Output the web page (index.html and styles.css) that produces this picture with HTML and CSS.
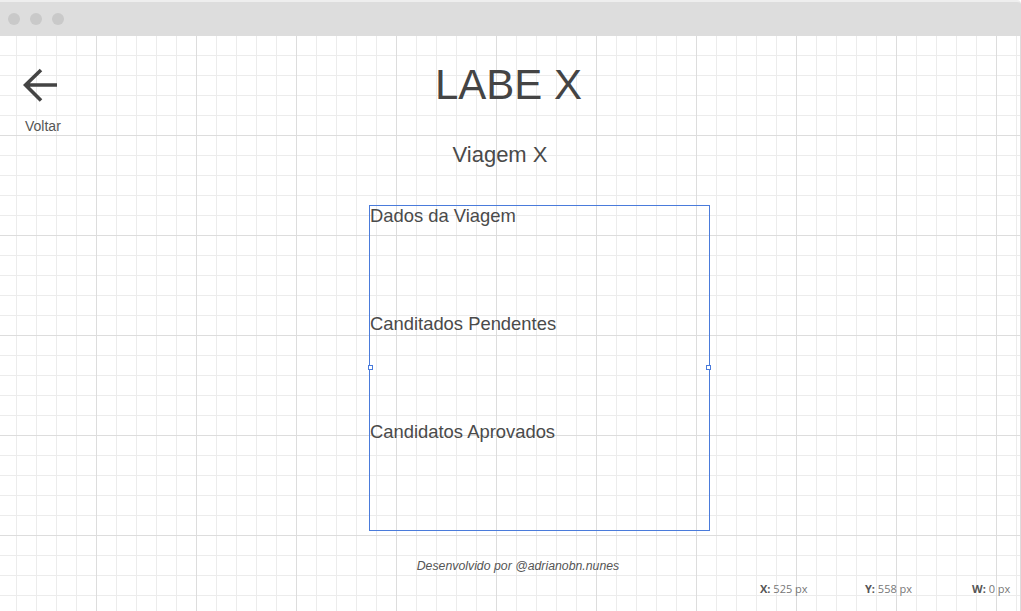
FILE: index.html
```html
<!DOCTYPE html>
<html lang="pt">
<head>
<meta charset="utf-8">
<title>LABE X - Viagem X</title>
<link rel="stylesheet" href="styles.css">
</head>
<body>
  <div class="chrome">
    <span class="dot"></span>
    <span class="dot"></span>
    <span class="dot"></span>
  </div>
  <main class="canvas">
    <header class="top">
      <a class="back" href="#">
        <svg class="back-icon" width="36" height="36" viewBox="0 0 36 36" aria-hidden="true">
          <path d="M2 18 H34 M18 3 L2.5 18 L18 33.5" fill="none" stroke="#444" stroke-width="3.6" stroke-linejoin="miter"/>
        </svg>
        <span class="back-label">Voltar</span>
      </a>
      <h1 class="title">LABE X</h1>
    </header>
    <h2 class="subtitle">Viagem X</h2>
    <section class="panel">
      <div class="section">Dados da Viagem</div>
      <div class="section">Canditados Pendentes</div>
      <div class="section">Candidatos Aprovados</div>
      <span class="handle handle-left"></span>
      <span class="handle handle-right"></span>
    </section>
    <footer class="credit">Desenvolvido por @adrianobn.nunes</footer>
    <div class="status">
      <span class="stat"><b>X:</b> 525 px</span>
      <span class="stat"><b>Y:</b> 558 px</span>
      <span class="stat"><b>W:</b> 0 px</span>
    </div>
  </main>
</body>
</html>
```

FILE: styles.css
```css
html, body {
  margin: 0;
  padding: 0;
}

body {
  width: 1021px;
  height: 611px;
  overflow: hidden;
  font-family: "Liberation Sans", Arial, sans-serif;
  color: #454545;
  background: #ffffff;
}

.chrome {
  height: 35px;
  box-sizing: border-box;
  border-top: 2px solid #eeeeee;
  background: #dddddd;
  display: flex;
  align-items: center;
  gap: 10px;
  padding-left: 8px;
  padding-top: 1px;
  border-top-right-radius: 4px;
}

.dot {
  width: 12px;
  height: 12px;
  border-radius: 50%;
  background: #c9c9c9;
}

.canvas {
  height: 576px;
  box-sizing: border-box;
  border-right: 1px solid #dcdcdc;
  display: flex;
  flex-direction: column;
  background-color: #ffffff;
  background-image:
    linear-gradient(to right, #dddddd 1px, transparent 1px),
    linear-gradient(to bottom, #dddddd 1px, transparent 1px),
    linear-gradient(to right, #ececec 1px, transparent 1px),
    linear-gradient(to bottom, #ececec 1px, transparent 1px);
  background-size: 100px 100px, 100px 100px, 20px 20px, 20px 20px;
  background-position: 96px 0, 0 0, 16px 0, 0 0;
}

.top {
  display: grid;
  grid-template-columns: 1fr auto 1fr;
  align-items: start;
  padding-top: 26px;
}

.back {
  grid-column: 1;
  display: flex;
  flex-direction: column;
  align-items: flex-start;
  padding-left: 23px;
  text-decoration: none;
  color: #4a4a4a;
}

.back-icon {
  display: block;
  margin-top: 6px;
}

.back-label {
  margin-top: 15px;
  margin-left: 2px;
  font-size: 14px;
  line-height: 16px;
  color: #555555;
}

.title {
  grid-column: 2;
  margin: 0 3px 0 0;
  font-size: 42px;
  line-height: 48px;
  font-weight: normal;
  color: #444444;
}

.subtitle {
  margin: 8px 0 0 0;
  padding-right: 20px;
  text-align: center;
  font-size: 22px;
  line-height: 26px;
  font-weight: normal;
  color: #4a4a4a;
}

.panel {
  position: relative;
  box-sizing: border-box;
  width: 341px;
  height: 326px;
  margin: 37px 0 0 369px;
  border: 1px solid #4a7bdb;
  display: flex;
  flex-direction: column;
}

.section {
  height: 108px;
  font-size: 18.4px;
  line-height: 20px;
  color: #4a4a4a;
}

.handle {
  position: absolute;
  top: 159px;
  width: 5px;
  height: 5px;
  box-sizing: border-box;
  border: 1px solid #4a7bdb;
  background: #ffffff;
}

.handle-left {
  left: -2px;
}

.handle-right {
  right: -2px;
}

.credit {
  margin-top: 28px;
  padding-left: 16px;
  text-align: center;
  font-size: 12.3px;
  line-height: 14px;
  font-style: italic;
  color: #555555;
}

.status {
  margin-top: 9px;
  display: grid;
  grid-template-columns: 105px 107px 48px;
  justify-content: end;
  font-family: "Open Sans", "Liberation Sans", sans-serif;
  font-size: 11px;
  line-height: 14px;
  color: #777777;
}

.stat b {
  font-weight: 700;
  color: #555555;
}
```
